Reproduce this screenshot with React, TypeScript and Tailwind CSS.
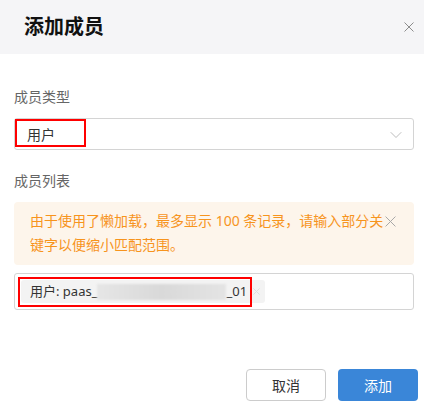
import React from "react";
import { ChevronDown } from "lucide-react";

const font = "font-['Noto_Sans','Noto_Sans_CJK_SC',sans-serif]";

const Cross: React.FC<{ size: number; className?: string }> = ({ size, className }) => (
  <svg width={size} height={size} viewBox="0 0 10 10" className={className} fill="none">
    <path d="M0.5 0.5L9.5 9.5M9.5 0.5L0.5 9.5" stroke="currentColor" strokeWidth={10 / size} />
  </svg>
);

const App: React.FC = () => {
  return (
    <div className={`flex h-[406px] w-[424px] flex-col bg-white ${font}`}>
      <div className="flex h-[54px] shrink-0 items-center justify-between bg-[#f5f5f7] pl-[24px] pr-[10px]">
        <span className="text-[20px] font-bold leading-none text-[#111]">添加成员</span>
        <Cross size={10} className="text-[#8c8c8c]" />
      </div>

      <div className="flex flex-1 flex-col pl-[14px] pr-[10px]">
        <label className="mt-[33px] text-[14px] leading-[20px] text-[#666]">成员类型</label>
        <div className="relative mt-[11px] flex h-[32px] items-center justify-between rounded-[3px] border border-[#d4d4d4] pl-[12px] pr-[7px]">
          <span className="text-[14px] text-[#333]">用户</span>
          <ChevronDown className="mt-[2px] size-[20px] text-[#b0b0b0]" strokeWidth={1} />
          <div className="absolute left-0 top-0 h-[28px] w-[71px] border-2 border-[#ff0000]" />
        </div>

        <label className="mt-[21px] text-[14px] leading-[20px] text-[#666]">成员列表</label>
        <div className="mt-[11px] flex h-[63px] items-start rounded-[4px] bg-[#fdf5eb] pl-[16px] pt-[7px]">
          <p className="w-[355px] text-[14px] leading-[24px] text-[#f7941d]">
            由于使用了懒加载，最多显示 100 条记录，请输入部分关键字以便缩小匹配范围。
          </p>
          <Cross size={11} className="mt-[7px] shrink-0 text-[#a8a8a8]" />
        </div>

        <div className="relative mt-[8px] flex h-[37px] items-center rounded-[3px] border border-[#d4d4d4] px-[6px]">
          <div className="flex h-[23px] w-[244px] items-center rounded-[3px] bg-[#f3f3f3] pl-[9px]">
            <span className="text-[13px] text-[#333]">用户: paas_</span>
            <span className="h-[16px] w-[129px] bg-gradient-to-r from-[#e6e6e6] via-[#d9d9d9] to-[#e4e4e4] blur-[1px]" />
            <span className="text-[13px] text-[#333]">_01</span>
            <Cross size={7} className="ml-[6px] text-[#e0e0e0]" />
          </div>
          <div className="absolute left-[3px] top-[3px] h-[30px] w-[234px] border-2 border-[#ff0000]" />
        </div>

        <div className="mt-[59px] flex justify-end gap-[12px]">
          <button className="h-[32px] w-[80px] rounded-[4px] border border-[#ccc] bg-white text-[14px] text-[#333]">
            取消
          </button>
          <button className="-mr-[4px] h-[32px] w-[80px] rounded-[4px] bg-[#3a86d8] text-[14px] text-white">
            添加
          </button>
        </div>
      </div>
    </div>
  );
};

export default App;
